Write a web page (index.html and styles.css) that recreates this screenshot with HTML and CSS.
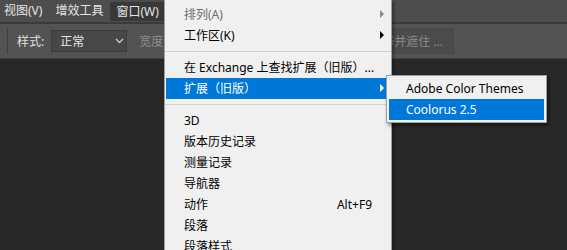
FILE: index.html
```html
<!DOCTYPE html>
<html lang="zh-CN">
<head>
<meta charset="utf-8">
<title>Photoshop 窗口菜单</title>
<link rel="stylesheet" href="styles.css">
</head>
<body>
<div class="app">
  <div class="menubar">
    <span class="mb-item first">视图(V)</span>
    <span class="mb-item">增效工具</span>
    <span class="mb-item active">窗口(W)</span>
  </div>
  <div class="optionsbar">
    <span class="grip"></span>
    <span class="opt-label">样式:</span>
    <span class="select"><span class="select-text">正常</span>
      <svg class="chev" width="9" height="6" viewBox="0 0 9 6"><path d="M1 1 L4.5 4.5 L8 1" fill="none" stroke="#c8c8c8" stroke-width="1.3"/></svg>
    </span>
    <span class="opt-dim">宽度:</span>
    <span class="spacer"></span>
    <span class="opt-button">选择并遮住 ...</span>
  </div>
  <div class="workspace"></div>

  <div class="menu main-menu">
    <div class="item disabled">排列(A)<span class="arrow"></span></div>
    <div class="item">工作区(K)<span class="arrow"></span></div>
    <div class="sep"></div>
    <div class="item">在 Exchange 上查找扩展（旧版）...</div>
    <div class="item hl">扩展（旧版）<span class="arrow"></span></div>
    <div class="sep"></div>
    <div class="item">3D</div>
    <div class="item">版本历史记录</div>
    <div class="item">测量记录</div>
    <div class="item">导航器</div>
    <div class="item">动作<span class="shortcut">Alt+F9</span></div>
    <div class="item">段落</div>
    <div class="item">段落样式</div>
  </div>

  <div class="menu sub-menu">
    <div class="item">Adobe Color Themes</div>
    <div class="item hl">Coolorus 2.5</div>
  </div>
</div>
</body>
</html>
```
FILE: styles.css
```css
html, body {
  margin: 0;
  padding: 0;
}
body {
  width: 567px;
  height: 250px;
  overflow: hidden;
  background: #282828;
  font-family: "Noto Sans", "Noto Sans CJK SC", sans-serif;
  font-size: 12px;
}
.app {
  position: relative;
  width: 567px;
  height: 250px;
  display: flex;
  flex-direction: column;
}
.menubar {
  height: 22px;
  background: #4d4d4d;
  border-bottom: 2px solid #3a3a3a;
  display: flex;
  align-items: stretch;
  gap: 1px;
  color: #e4e4e4;
}
.mb-item {
  display: flex;
  align-items: center;
  padding: 0 6px;
  line-height: 1;
}
.mb-item.first {
  padding-left: 4px;
}
.mb-item.active {
  background: #383838;
  margin: 2px 0 1px;
}
.optionsbar {
  height: 34px;
  background: #535353;
  border-bottom: 1px solid #3f3f3f;
  display: flex;
  align-items: center;
  color: #e0e0e0;
}
.grip {
  width: 1px;
  height: 26px;
  background: #3e3e3e;
  margin-left: 7px;
  margin-right: 9px;
}
.opt-label {
  margin-right: 7px;
}
.select {
  background: #474747;
  border: 1px solid #3c3c3c;
  display: flex;
  align-items: center;
  justify-content: space-between;
  padding: 0 2px 0 8px;
  box-sizing: border-box;
  width: 76px;
  height: 22px;
}
.select-text {
  color: #e6e6e6;
}
.chev {
  display: block;
}
.opt-dim {
  margin-left: 12px;
  color: #8c8c8c;
}
.spacer {
  flex: 1;
}
.opt-button {
  height: 24px;
  display: flex;
  align-items: center;
  padding: 0 10px 0 6px;
  background: #4b4b4b;
  border: 1px solid #484848;
  color: #8a8a8a;
  margin-right: 113px;
}
.workspace {
  flex: 1;
  background: #282828;
}
.menu {
  position: absolute;
  background: #f0f0f0;
  border: 1px solid #a0a0a0;
  box-sizing: border-box;
  color: #000;
}
.main-menu {
  left: 164px;
  top: 0;
  width: 228px;
  height: 262px;
  border-top: none;
  padding-top: 4px;
  box-shadow: 2px 2px 3px rgba(0, 0, 0, 0.35);
}
.sub-menu {
  left: 386px;
  top: 75px;
  width: 161px;
  height: 48px;
  padding-top: 2px;
  box-shadow: 2px 2px 4px rgba(0, 0, 0, 0.55);
}
.item {
  position: relative;
  height: 21px;
  line-height: 21px;
  margin: 0 2px 0 1px;
  padding: 0 17px 0 17px;
  display: flex;
  justify-content: space-between;
  white-space: nowrap;
}
.sub-menu .item {
  margin: 0 2px;
}
.main-menu .item {
  padding-left: 18px;
}
.item.disabled {
  color: #6d6d6d;
}
.item.hl {
  background: #0078d7;
  color: #fff;
}
.arrow {
  position: absolute;
  right: 5px;
  top: 6px;
  width: 0;
  height: 0;
  border-top: 4px solid transparent;
  border-bottom: 4px solid transparent;
  border-left: 4px solid #000;
}
.disabled .arrow {
  border-left-color: #8a8a8a;
}
.hl .arrow {
  border-left-color: #fff;
}
.sep {
  height: 1px;
  background: #d2d2d2;
  margin: 5px 0;
}
```
